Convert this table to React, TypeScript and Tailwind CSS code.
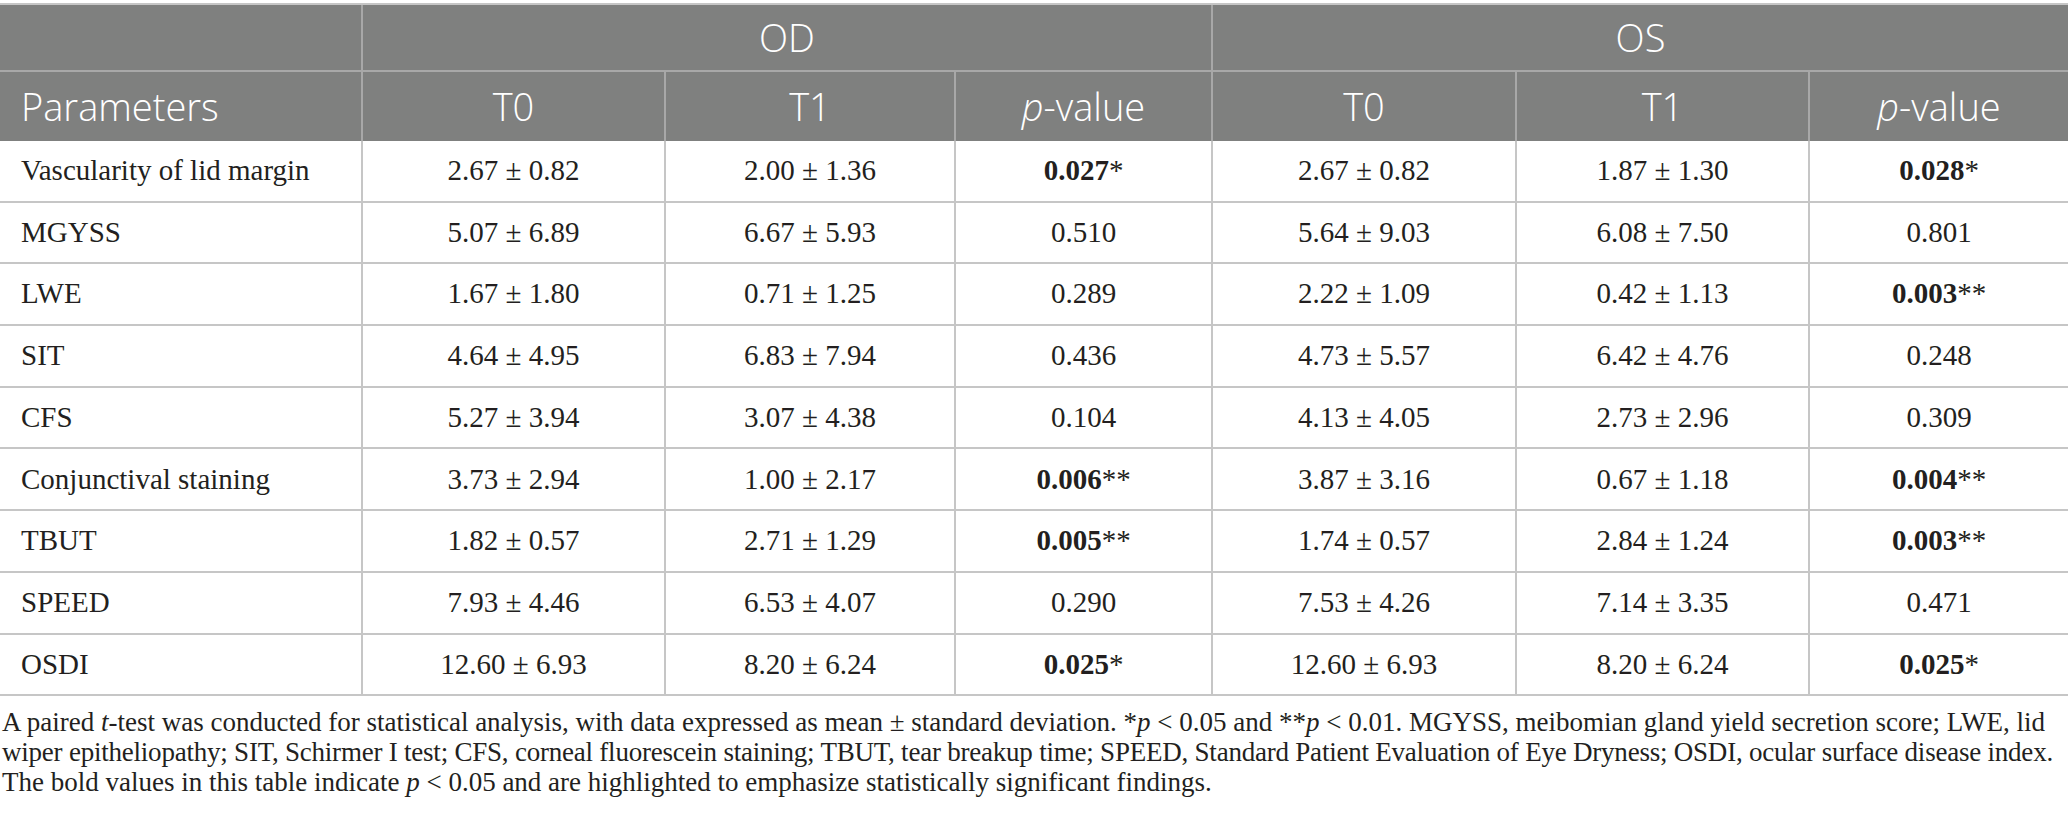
const rows: [string, string, string, [string, string], string, string, [string, string]][] = [
  ["Vascularity of lid margin", "2.67 ± 0.82", "2.00 ± 1.36", ["0.027", "*"], "2.67 ± 0.82", "1.87 ± 1.30", ["0.028", "*"]],
  ["MGYSS", "5.07 ± 6.89", "6.67 ± 5.93", ["", "0.510"], "5.64 ± 9.03", "6.08 ± 7.50", ["", "0.801"]],
  ["LWE", "1.67 ± 1.80", "0.71 ± 1.25", ["", "0.289"], "2.22 ± 1.09", "0.42 ± 1.13", ["0.003", "**"]],
  ["SIT", "4.64 ± 4.95", "6.83 ± 7.94", ["", "0.436"], "4.73 ± 5.57", "6.42 ± 4.76", ["", "0.248"]],
  ["CFS", "5.27 ± 3.94", "3.07 ± 4.38", ["", "0.104"], "4.13 ± 4.05", "2.73 ± 2.96", ["", "0.309"]],
  ["Conjunctival staining", "3.73 ± 2.94", "1.00 ± 2.17", ["0.006", "**"], "3.87 ± 3.16", "0.67 ± 1.18", ["0.004", "**"]],
  ["TBUT", "1.82 ± 0.57", "2.71 ± 1.29", ["0.005", "**"], "1.74 ± 0.57", "2.84 ± 1.24", ["0.003", "**"]],
  ["SPEED", "7.93 ± 4.46", "6.53 ± 4.07", ["", "0.290"], "7.53 ± 4.26", "7.14 ± 3.35", ["", "0.471"]],
  ["OSDI", "12.60 ± 6.93", "8.20 ± 6.24", ["0.025", "*"], "12.60 ± 6.93", "8.20 ± 6.24", ["0.025", "*"]],
];

const head = "flex items-center justify-center bg-[#7f807f] text-white border-[#a8a8a8] text-[38px] font-light";
const cell = "flex items-center justify-center border-b-2 border-[#c6c6c6] h-[61.7px]";

const PValue = ({ v }: { v: [string, string] }) => (
  <span>
    {v[0] && <b className="font-bold">{v[0]}</b>}
    {v[1]}
  </span>
);

export default function App() {
  return (
    <div className="w-[2068px] min-h-[824px] bg-white pt-[3px]">
      <div
        className="grid grid-cols-[363px_303px_290px_257px_304px_293px_258px] border-t-2 border-[#c6c6c6]"
        style={{ fontFamily: "'Open Sans', sans-serif" }}
      >
        {/* header row 1 */}
        <div className={`${head} h-[67px] border-r-2 border-b-2`} />
        <div className={`${head} col-span-3 h-[67px] border-r-2 border-b-2`}>OD</div>
        <div className={`${head} col-span-3 h-[67px] border-b-2`}>OS</div>

        {/* header row 2 */}
        <div className={`${head} h-[69px] justify-start pl-[21px] border-r-2`}>Parameters</div>
        <div className={`${head} h-[69px] border-r-2`}>T0</div>
        <div className={`${head} h-[69px] border-r-2`}>T1</div>
        <div className={`${head} h-[69px] border-r-2`}>
          <span><i>p</i>-value</span>
        </div>
        <div className={`${head} h-[69px] border-r-2`}>T0</div>
        <div className={`${head} h-[69px] border-r-2`}>T1</div>
        <div className={`${head} h-[69px]`}>
          <span><i>p</i>-value</span>
        </div>

        {rows.map((r) => (
          <div key={r[0]} className="contents text-[29px] text-[#231f20]" style={{ fontFamily: "'Liberation Serif', serif" }}>
            <div className={`${cell} justify-start pl-[21px] border-r-2`}>{r[0]}</div>
            <div className={`${cell} border-r-2`}>{r[1]}</div>
            <div className={`${cell} border-r-2`}>{r[2]}</div>
            <div className={`${cell} border-r-2`}><PValue v={r[3]} /></div>
            <div className={`${cell} border-r-2`}>{r[4]}</div>
            <div className={`${cell} border-r-2`}>{r[5]}</div>
            <div className={cell}><PValue v={r[6]} /></div>
          </div>
        ))}
      </div>

      <p
        className="mt-[11px] pl-[2px] text-[27px] leading-[30px] text-[#231f20] whitespace-nowrap"
        style={{ fontFamily: "'Liberation Serif', serif" }}
      >
        A paired <i>t</i>-test was conducted for statistical analysis, with data expressed as mean ± standard deviation. *<i>p</i> &lt; 0.05 and **<i>p</i> &lt; 0.01. MGYSS, meibomian gland yield secretion score; LWE, lid
        <br />
        <span className="tracking-[-0.22px]">
          wiper epitheliopathy; SIT, Schirmer I test; CFS, corneal fluorescein staining; TBUT, tear breakup time; SPEED, Standard Patient Evaluation of Eye Dryness; OSDI, ocular surface disease index.
        </span>
        <br />
        The bold values in this table indicate <i>p</i> &lt; 0.05 and are highlighted to emphasize statistically significant findings.
      </p>
    </div>
  );
}
